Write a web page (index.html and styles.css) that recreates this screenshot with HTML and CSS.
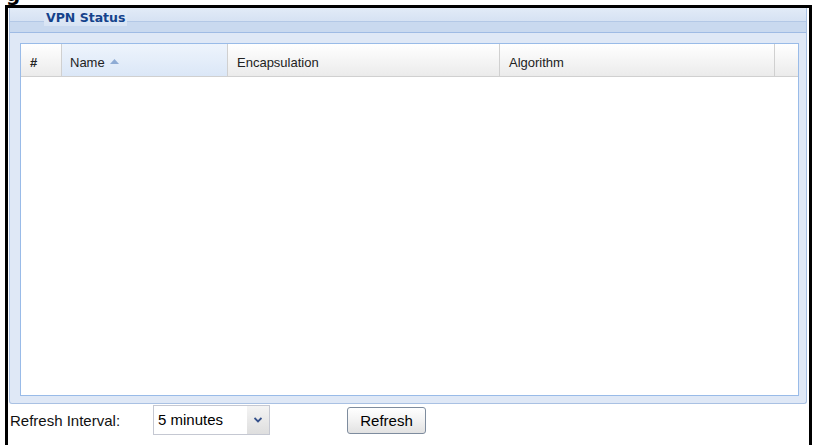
FILE: index.html
```html
<!DOCTYPE html>
<html lang="en">

<head>
    <meta charset="UTF-8">
    <title>VPN Status</title>
    <link rel="stylesheet" href="styles.css">
</head>

<body>
    <div class="cut_above"><span>g</span></div>
    <div class="frame">
        <div class="panel">
            <div class="panel_title">
                <span>VPN Status</span>
            </div>
            <div class="panel_body">
                <div class="grid">
                    <div class="grid_header">
                        <div class="col num">#</div>
                        <div class="col sorted">Name
                            <svg class="sort_icon" width="9" height="5" viewBox="0 0 9 5">
                                <path d="M0 5 L4.5 0 L9 5 Z" fill="#8eabd4" />
                            </svg>
                        </div>
                        <div class="col">Encapsulation</div>
                        <div class="col">Algorithm</div>
                        <div class="col last"></div>
                    </div>
                    <!-- no tunnels -->
                </div>
            </div>
        </div>
        <div class="toolbar">
            <label class="label">Refresh Interval:</label>
            <div class="select">
                <span class="select_text">5 minutes</span>
                <span class="select_btn">
                    <svg width="8" height="6" viewBox="0 0 8 6">
                        <path d="M0.5 1 L4 4.5 L7.5 1" fill="none" stroke="#34508a" stroke-width="1.8" />
                    </svg>
                </span>
            </div>
            <button class="btn">Refresh</button>
        </div>
    </div>
</body>

</html>
```

FILE: styles.css
```css
* {
    margin: 0;
    padding: 0;
    box-sizing: border-box;
}

body {
    background: #fff;
    font-family: "Liberation Sans", Arial, sans-serif;
    color: #000;
    width: 815px;
    height: 445px;
    overflow: hidden;
}

.cut_above {
    height: 5px;
    overflow: hidden;
    padding-left: 6px;
}

.cut_above span {
    display: block;
    margin-top: -16px;
    font: bold 20px "DejaVu Sans", sans-serif;
    line-height: 20px;
}

.frame {
    margin-left: 5px;
    width: 807px;
    height: 440px;
    border: 3px solid #000;
    border-bottom: none;
}

.panel {
    width: 798px;
    height: 396px;
    margin-left: 1px;
    border: 1px solid #a9c1e3;
    border-top: none;
    border-radius: 0 0 3px 3px;
    background: #dfe8f6;
}

.panel_title {
    position: relative;
    height: 25px;
    background: linear-gradient(#e2ebf7 0, #d6e2f3 13px, #c9d9ef 14px, #c9d9ef 24px);
    border-bottom: 1px solid #9fbbe4;
    padding-left: 34px;
}

.panel_title::before {
    content: "";
    position: absolute;
    left: 0;
    right: 0;
    top: 13px;
    border-top: 1px solid #b3c8e6;
}

.panel_title span {
    position: relative;
    display: inline-block;
    padding: 0 2px;
    font: bold 12.5px "DejaVu Sans", sans-serif;
    color: #15428b;
    line-height: 16px;
    margin-top: 1px;
    background: linear-gradient(#e2ebf7 0, #d8e4f4 100%);
}

.panel_body {
    padding: 10px 6px 0 10px;
}

.grid {
    width: 779px;
    height: 353px;
    border: 1px solid #99bbe8;
    background: #fff;
}

.grid_header {
    display: grid;
    grid-template-columns: 41px 166px 272px 275px 1fr;
    height: 33px;
    background: linear-gradient(#ffffff, #f3f3f3 60%, #ebebeb);
    border-bottom: 1px solid #d0d0d0;
}

.col {
    display: flex;
    align-items: center;
    padding: 4px 0 0 9px;
    font-size: 13px;
    color: #222;
    border-right: 1px solid #d0d0d0;
}

.col.num {
    font-weight: bold;
}

.col.sorted {
    background: linear-gradient(#eef4fc, #dbe7f7);
    padding-left: 8px;
}

.col.last {
    border-right: none;
}

.sort_icon {
    margin-left: 5px;
    margin-top: -1px;
}

.toolbar {
    display: flex;
    align-items: center;
    height: 30px;
    margin-top: 1px;
    padding-left: 2px;
}

.label {
    width: 143px;
    font-size: 15px;
    color: #111;
}

.select {
    display: flex;
    width: 117px;
    height: 30px;
    border: 1px solid #c5c8d2;
    background: #fff;
}

.select_text {
    flex: 1;
    padding: 5px 0 0 4px;
    font-size: 15px;
}

.select_btn {
    width: 22px;
    display: flex;
    align-items: center;
    justify-content: center;
    background: linear-gradient(#f4f4f4, #dedede);
}

.btn {
    width: 79px;
    height: 27px;
    margin-left: 77px;
    border: 1px solid #7e8c9e;
    border-radius: 3px;
    background: linear-gradient(#ffffff, #f2f2f2 50%, #e2e2e2);
    font-family: "Liberation Sans", Arial, sans-serif;
    font-size: 15px;
    color: #000;
}
```
